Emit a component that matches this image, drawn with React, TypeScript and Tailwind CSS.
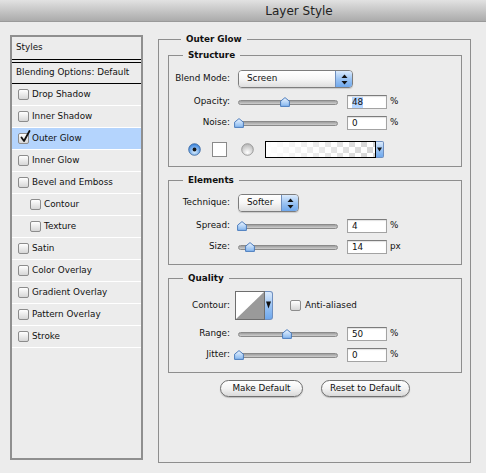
import React from 'react'

const styleRows = [
  { label: 'Drop Shadow' },
  { label: 'Inner Shadow' },
  { label: 'Outer Glow', checked: true },
  { label: 'Inner Glow' },
  { label: 'Bevel and Emboss' },
  { label: 'Contour', sub: true },
  { label: 'Texture', sub: true },
  { label: 'Satin' },
  { label: 'Color Overlay' },
  { label: 'Gradient Overlay' },
  { label: 'Pattern Overlay' },
  { label: 'Stroke' },
]

function CheckBox({ checked = false }: { checked?: boolean }) {
  return (
    <span className="relative block w-[11px] h-[11px] shrink-0 rounded-[2px] border border-[#8c8c8c] bg-gradient-to-b from-white to-[#d6d6d6]">
      {checked && (
        <svg className="absolute -top-[4px] left-[1px]" width="11" height="13" viewBox="0 0 11 13">
          <path d="M1.5 7.5 L4 11 L9.5 1" fill="none" stroke="#111" strokeWidth="1.8" strokeLinecap="round" strokeLinejoin="round" />
        </svg>
      )}
    </span>
  )
}

function Thumb() {
  return (
    <svg width="10" height="10" viewBox="0 0 10 10">
      <defs>
        <linearGradient id="thumb" x1="0" y1="0" x2="0" y2="1">
          <stop offset="0" stopColor="#eef6ff" />
          <stop offset="1" stopColor="#84b6ef" />
        </linearGradient>
      </defs>
      <polygon points="5,0.6 9.4,4.2 9.4,9.4 0.6,9.4 0.6,4.2" fill="url(#thumb)" stroke="#3f73b8" strokeWidth="0.9" />
    </svg>
  )
}

function Slider({ pos }: { pos: number }) {
  return (
    <div className="relative w-[100px] h-[14px] shrink-0 flex items-center">
      <div className="w-full h-[5px] rounded-full border border-[#8a8a8a] bg-gradient-to-b from-[#9e9e9e] to-[#cfcfcf]" />
      <div className="absolute top-[2px]" style={{ left: -4.5 + pos * 96 }}>
        <Thumb />
      </div>
    </div>
  )
}

function NumberBox({ value, selected = false }: { value: string; selected?: boolean }) {
  return (
    <div className="ml-[9px] w-[40px] h-[14px] shrink-0 flex items-center border border-[#a3a3a3] border-t-[#7c7c7c] bg-white pl-[4px] shadow-[inset_0_1px_1px_rgba(0,0,0,0.12)]">
      <span className={selected ? 'bg-[#b5d5ff] leading-[11px]' : 'leading-[11px]'}>{value}</span>
    </div>
  )
}

function SliderRow({ label, pos, value, unit, selected }: { label: string; pos: number; value: string; unit: string; selected?: boolean }) {
  return (
    <div className="flex items-center h-[14px] mt-[7px]">
      <span className="w-[61px] text-right">{label}</span>
      <span className="ml-[8px]">
        <Slider pos={pos} />
      </span>
      <NumberBox value={value} selected={selected} />
      <span className="ml-[3px]">{unit}</span>
    </div>
  )
}

function Stepper() {
  return (
    <svg width="7" height="11" viewBox="0 0 7 11">
      <polygon points="3.5,0.5 6.5,4 0.5,4" fill="#111" />
      <polygon points="0.5,7 6.5,7 3.5,10.5" fill="#111" />
    </svg>
  )
}

function PopupSelect({ value, width }: { value: string; width: string }) {
  return (
    <div className={`flex h-[18px] shrink-0 rounded-[4px] border border-[#7d7d7d] overflow-hidden shadow-[0_1px_1px_rgba(0,0,0,0.15)] ${width}`}>
      <div className="flex-1 flex items-center pl-[8px] bg-gradient-to-b from-white via-[#f6f6f6] to-[#dedede]">{value}</div>
      <div className="w-[17px] flex items-center justify-center border-l border-[#6f8fbf] bg-gradient-to-b from-[#dcebfc] via-[#9cc4f3] to-[#6fa8ec]">
        <Stepper />
      </div>
    </div>
  )
}

function Radio({ on = false }: { on?: boolean }) {
  return (
    <svg width="13" height="13" viewBox="0 0 13 13" className="shrink-0">
      <defs>
        <radialGradient id="radioOn" cx="50%" cy="70%" r="65%">
          <stop offset="0" stopColor="#d8eeff" />
          <stop offset="1" stopColor="#3c84dc" />
        </radialGradient>
        <radialGradient id="radioOff" cx="50%" cy="75%" r="65%">
          <stop offset="0" stopColor="#ffffff" />
          <stop offset="1" stopColor="#bdbdbd" />
        </radialGradient>
      </defs>
      <circle cx="6.5" cy="6.5" r="5.8" fill={on ? 'url(#radioOn)' : 'url(#radioOff)'} stroke={on ? '#2f5f9c' : '#8a8a8a'} strokeWidth="0.8" />
      {on && <circle cx="6.5" cy="6.5" r="1.9" fill="#151515" />}
    </svg>
  )
}

function GradientSwatch() {
  return (
    <div className="flex h-[17px] shrink-0">
      <svg width="111" height="17" viewBox="0 0 111 17">
        <defs>
          <pattern id="checker" width="12" height="12" patternUnits="userSpaceOnUse">
            <rect width="12" height="12" fill="#ffffff" />
            <rect width="6" height="6" fill="#d4d4d4" />
            <rect x="6" y="6" width="6" height="6" fill="#d4d4d4" />
          </pattern>
          <linearGradient id="fade" x1="0" y1="0" x2="1" y2="0">
            <stop offset="0" stopColor="#ffffff" stopOpacity="1" />
            <stop offset="1" stopColor="#ffffff" stopOpacity="0" />
          </linearGradient>
        </defs>
        <rect x="0" y="0" width="111" height="17" fill="url(#checker)" />
        <rect x="0" y="0" width="111" height="17" fill="url(#fade)" />
        <rect x="0.5" y="0.5" width="110" height="16" fill="none" stroke="#000" strokeWidth="1" />
      </svg>
      <div className="w-[8px] flex items-center justify-center rounded-r-[2px] border border-l-0 border-[#6f8fbf] bg-gradient-to-b from-[#dcebfc] via-[#9cc4f3] to-[#6fa8ec]">
        <svg width="5" height="5" viewBox="0 0 5 5">
          <polygon points="0,0.5 5,0.5 2.5,4.5" fill="#111" />
        </svg>
      </div>
    </div>
  )
}

function ContourSwatch() {
  return (
    <div className="flex h-[29px] shrink-0">
      <svg width="30" height="29" viewBox="0 0 30 29">
        <rect width="30" height="29" fill="#ffffff" />
        <polygon points="1,28 29,1 29,28" fill="#9a9a9a" />
        <rect x="0.5" y="0.5" width="29" height="28" fill="none" stroke="#6e6e6e" strokeWidth="1" />
      </svg>
      <div className="w-[8px] flex items-start justify-center pt-[9px] rounded-r-[3px] border border-l-0 border-[#6f8fbf] bg-gradient-to-b from-[#dcebfc] via-[#9cc4f3] to-[#6fa8ec]">
        <svg width="5" height="8" viewBox="0 0 5 8">
          <polygon points="0,0.5 5,0.5 2.5,7.5" fill="#111" />
        </svg>
      </div>
    </div>
  )
}

function Group({ title, className, children }: { title: string; className?: string; children: React.ReactNode }) {
  return (
    <fieldset className={`border border-[#8e8e8e] ${className ?? ''}`}>
      <legend className="ml-[14px] px-[5px] font-bold leading-[12px]">{title}</legend>
      {children}
    </fieldset>
  )
}

function MacButton({ label, width }: { label: string; width: string }) {
  return (
    <button className={`h-[17px] rounded-full border border-[#6f6f6f] bg-gradient-to-b from-white via-[#f3f3f3] to-[#d9d9d9] shadow-[0_1px_1px_rgba(0,0,0,0.2)] text-[#111] ${width}`}>
      {label}
    </button>
  )
}

export default function App() {
  return (
    <div className="w-[486px] h-[473px] overflow-hidden bg-[#ececec] font-['DejaVu_Sans',sans-serif] text-[8.8px] text-[#111]">
      {/* Title bar */}
      <div className="h-[22px] flex items-center justify-center pl-[112px] border-b border-[#9a9a9a] bg-gradient-to-b from-[#e2e2e2] to-[#ababab] text-[12px] text-[#222]">
        Layer Style
      </div>

      <div className="flex items-start pl-[10px]">
        {/* Styles list */}
        <div className="mt-[13px] w-[133px] h-[425px] border-2 border-[#8f8f8f] flex flex-col">
          <div className="h-[22px] flex items-center pl-[4px]">Styles</div>
          <div className="h-[4px] border-y border-black" />
          <div className="h-[21px] flex items-center pl-[4px] border-b border-black">Blending Options: Default</div>
          {styleRows.map((row) => (
            <div
              key={row.label}
              className={`h-[22px] flex items-center gap-[2px] border-b border-white ${row.sub ? 'pl-[18px]' : 'pl-[6px]'} ${row.checked ? 'bg-[#b4d4fd]' : ''}`}
            >
              <CheckBox checked={row.checked} />
              <span className="pl-px">{row.label}</span>
            </div>
          ))}
        </div>

        {/* Outer Glow panel */}
        <fieldset className="mt-[11px] ml-[15px] w-[313px] h-[430px] border border-[#8e8e8e] pl-[9px] pr-[8px]">
          <legend className="ml-[13px] px-[5px] font-bold leading-[12px]">Outer Glow</legend>

          <Group title="Structure" className="mt-[4px] pb-[8px]">
            <div className="flex items-center h-[18px] mt-[9px]">
              <span className="w-[61px] text-right">Blend Mode:</span>
              <span className="ml-[8px]">
                <PopupSelect value="Screen" width="w-[115px]" />
              </span>
            </div>
            <SliderRow label="Opacity:" pos={0.48} value="48" unit="%" selected />
            <SliderRow label="Noise:" pos={0} value="0" unit="%" />
            <div className="flex items-center h-[17px] mt-[11px] pl-[19px]">
              <Radio on />
              <div className="ml-[11px] w-[15px] h-[15px] border border-[#8a8a8a] bg-white" />
              <span className="ml-[14px]">
                <Radio />
              </span>
              <span className="ml-[11px]">
                <GradientSwatch />
              </span>
            </div>
          </Group>

          <Group title="Elements" className="mt-[7px] pb-[10px]">
            <div className="flex items-center h-[18px] mt-[8px]">
              <span className="w-[61px] text-right">Technique:</span>
              <span className="ml-[8px]">
                <PopupSelect value="Softer" width="w-[61px]" />
              </span>
            </div>
            <SliderRow label="Spread:" pos={0.04} value="4" unit="%" />
            <SliderRow label="Size:" pos={0.12} value="14" unit="px" />
          </Group>

          <Group title="Quality" className="mt-[7px] pb-[10px]">
            <div className="flex items-center h-[29px] mt-[7px]">
              <span className="w-[61px] text-right">Contour:</span>
              <span className="ml-[5px]">
                <ContourSwatch />
              </span>
              <span className="ml-[17px]">
                <CheckBox />
              </span>
              <span className="ml-[4px]">Anti-aliased</span>
            </div>
            <SliderRow label="Range:" pos={0.5} value="50" unit="%" />
            <SliderRow label="Jitter:" pos={0} value="0" unit="%" />
          </Group>

          <div className="mt-[7px] flex justify-center gap-[18px]">
            <MacButton label="Make Default" width="w-[83px]" />
            <MacButton label="Reset to Default" width="w-[89px]" />
          </div>
        </fieldset>
      </div>
    </div>
  )
}
